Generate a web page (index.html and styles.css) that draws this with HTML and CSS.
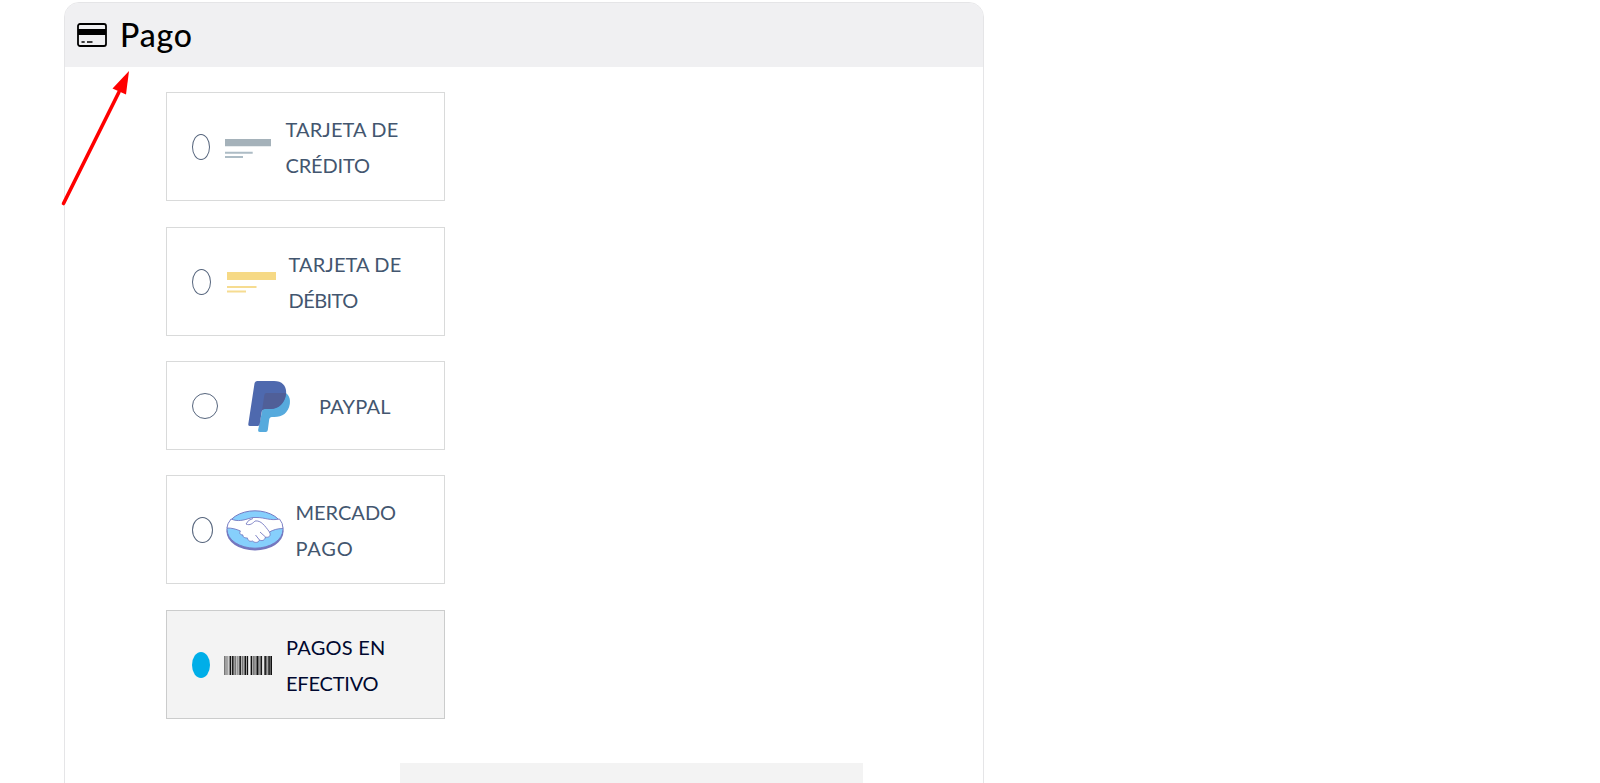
FILE: index.html
```html
<!DOCTYPE html>
<html lang="es">
<head>
<meta charset="utf-8">
<title>Pago</title>
<link rel="stylesheet" href="styles.css">
</head>
<body>
<main class="panel">
  <header class="panel-header">
    <svg class="card-icon" width="30" height="24" viewBox="0 0 30 24"><rect x="1" y="1" width="28" height="22" rx="2" fill="none" stroke="#000" stroke-width="1.8"/><path d="M1 6h28v6H1z"/><path d="M4.5 19h3.2M10 19h5.500" stroke="#000" stroke-width="1.7"/></svg>
    <h1 class="title">Pago</h1>
  </header>
  <div class="options">
    <label class="option credit">
      <span class="radio"></span>
      <svg class="icon" width="46" height="20" viewBox="0 0 46 20"><path d="M0 0h46v7.200H0z" fill="#a5b2ba"/><path d="M0 13.700h27.700M0 18h18" stroke="#adbcc5" stroke-width="1.900"/></svg>
      <span class="label"><span class="line l-tarjeta">TARJETA DE</span><span class="line l-credito">CRÉDITO</span></span>
    </label>
    <label class="option debit">
      <span class="radio"></span>
      <svg class="icon" width="49" height="21" viewBox="0 0 49 21"><path d="M0 0h49v8H0z" fill="#f6d985"/><path d="M0 15h29.500M0 19.600h19" stroke="#f6dc91" stroke-width="2"/></svg>
      <span class="label"><span class="line l-tarjeta">TARJETA DE</span><span class="line l-debito">DÉBITO</span></span>
    </label>
    <label class="option paypal">
      <span class="radio"></span>
      <svg class="icon" width="43" height="51" viewBox="0 0 43 51"><path d="M18 12h19.500C41 14 42.600 18 41.800 23c-1.500 9-7.500 13-15.500 13h-2.500c-1.500 0-2.300 1-2.600 2.500l-1.400 10.500q-.3 2-2 2h-6q-2 0-1.700-2z" fill="#56aadd"/><path d="M9 0h17c9 0 13 6 12 13-1.300 9-7 15-16 15h-5c-2 0-3 1-3.300 3l-2 12q-.3 2-2 2H2q-2 0-1.700-2L6.500 2.500Q7 0 9 0z" fill="#4e69ae"/><path d="M18.500 12H38.200c-1 9.500-7 16-16.200 16h-5c-1.500 0-2.500.6-3 1.800l2.300-15.600q.3-2.200 2.200-2.200z" fill="#505f98"/></svg>
      <span class="label"><span class="line l-paypal">PAYPAL</span></span>
    </label>
    <label class="option mercado">
      <span class="radio"></span>
      <svg class="icon" width="58" height="41" viewBox="0 0 58 41"><ellipse cx="29" cy="21.500" rx="28.500" ry="19" fill="#7476bd"/><ellipse cx="29" cy="19.500" rx="28" ry="18.700" fill="#86cffc" stroke="#7579c2"/><path d="M5 9C12 12 18 10 23 8.500q4-1.500 8-1c8 0 13 3.500 22.500 1.500Q57 13 57 18.500C51 18.500 47 20 43.500 22c2 4-1 6-4 5-1 4-4 4-6 3-1 3-5 3-7 1-3 1-5-1-5-3-3 0-5-1-4.500-3-3 0-4-2-2.500-4C10 19 6 18 1 18q0-4 4-9z" fill="#fff" stroke="#7579c2" stroke-width=".9"/><path d="M27 8.500q-5 1-7 5.500c4 2 7-1 9-3 6-1 10 5 14.500 11M34 22l5.500 5M29.500 25l4 5" fill="none" stroke="#7579c2" stroke-width=".9"/></svg>
      <span class="label"><span class="line l-mercado">MERCADO</span><span class="line l-pago">PAGO</span></span>
    </label>
    <label class="option cash">
      <span class="radio"></span>
      <svg class="icon" width="48" height="19" viewBox="0 0 49 19" preserveAspectRatio="none"><path d="M0 0h49v19H0z" fill="#ccc"/><path d="M.7 0v19M11.500 0v19M19 0v19M30.500 0v19M35.500 0v19M43.500 0v19" stroke="#777" stroke-width="1.700"/><path d="M3 0v19M14 0v19M32.500 0v19M47.500 0v19" stroke="#999" stroke-width="1.600"/><path d="M6.500 0v19M9 0v19M16.500 0v19M21.700 0v19M24 0v19M28 0v19M34 0v19M38 0v19M42 0v19M46 0v19M48.300 0v19" stroke="#111" stroke-width="1.500"/><path d="M24.900 0h1.700v19h-1.700zM39.500 0h1v19h-1z" fill="#f3f3f3"/></svg>
      <span class="label"><span class="line l-pagos">PAGOS EN</span><span class="line l-efectivo">EFECTIVO</span></span>
    </label>
  </div>
  <div class="detail"></div>
</main>
<svg class="arrow" width="72" height="140" viewBox="0 0 72 140"><path d="M4.500 133.500L60 22" stroke="#f00" stroke-width="3.600" stroke-linecap="round"/><path d="M70 1L53.500 18.500L67 24.500z" fill="#f00"/></svg>
</body>
</html>
```
FILE: styles.css
```css
* { box-sizing: border-box; }
body { margin: 0; height: 783px; overflow: hidden; padding: 2px 0 0 63.5px; background: #fff; font-family: Lato, sans-serif; }
.panel { width: 920.5px; height: 820px; border: 1px solid #e5e5e7; border-radius: 15px 15px 0 0; overflow: hidden; }
.panel-header { display: flex; align-items: center; height: 64px; padding-left: 12.500px; background: #f0f0f2; }
.title { margin: 0 0 0 13px; font-size: 32px; line-height: 62px; font-weight: 500; letter-spacing: .8px; color: #000; }
.options { display: flex; flex-direction: column; width: 279px; margin: 25px 0 0 101.500px; }
.option { display: flex; align-items: center; height: 109px; margin-bottom: 25px; padding-left: 25px; border: 1px solid #d9dada; color: #43566f; }
.credit, .mercado { margin-bottom: 26px; }
.paypal { height: 89px; }
.radio { flex: none; width: 18px; height: 26px; border: 1.400px solid #56657d; border-radius: 50%; }
.icon { flex: none; margin-left: 15px; }
.credit .icon { margin-top: 4px; }
.debit .radio { width: 19px; }
.debit .icon { margin: 2px 0 0 15.500px; }
.paypal .radio { width: 26px; }
.paypal .icon { margin: 2px 0 0 29.500px; }
.mercado .radio { width: 21px; }
.mercado .icon { margin: 2px 0 0 12.500px; }
.cash { margin-bottom: 0; border-color: #cbcccc; background: #f3f3f3; color: #00082f; }
.cash .radio { border: 0; background: #00aee8; }
.cash .icon { margin: 2px 0 0 14px; }
.label { margin-left: 14.500px; padding-top: 2px; font-size: 20px; line-height: 35.400px; }
.debit .label { margin-left: 13px; }
.paypal .label { margin-left: 28.500px; }
.mercado .label { margin-left: 12px; }
.cash .label { margin-left: 14px; }
.line { display: block; white-space: nowrap; }
.l-tarjeta { letter-spacing: .12px; }
.l-credito { letter-spacing: -.15px; }
.l-debito { letter-spacing: -.55px; }
.l-paypal { letter-spacing: .2px; }
.l-pago { letter-spacing: .8px; }
.l-pagos { letter-spacing: .25px; }
.l-efectivo { letter-spacing: -.2px; }
.detail { width: 462.500px; height: 60px; margin: 44px 0 0 335.500px; background: #f3f3f3; }
.arrow { position: absolute; left: 59px; top: 70px; }
```
